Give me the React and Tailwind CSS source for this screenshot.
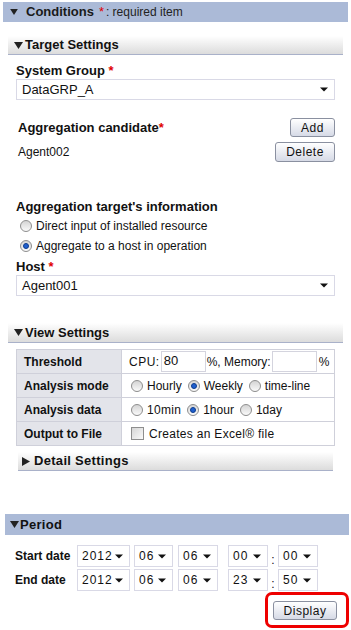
import React from 'react';

// small black caret used by every select box
const Caret = () => (
  <svg width="8" height="5" viewBox="0 0 8 5">
    <path d="M0 0.5h8L4 4.5z" fill="#111" />
  </svg>
);

const Down = ({ w = 9, h = 7 }) => (
  <svg width={w} height={h} viewBox="0 0 9 7">
    <path d="M0 0h9L4.5 7z" fill="#222" />
  </svg>
);

const Right = () => (
  <svg width="8" height="9" viewBox="0 0 8 9">
    <path d="M0 0l8 4.5L0 9z" fill="#222" />
  </svg>
);

const Select = ({ value }) => (
  <div className="flex items-center justify-between h-[21px] border border-[#d9d9e6] bg-white pl-[5px] pr-[6px] text-[13px]">
    <span>{value}</span>
    <Caret />
  </div>
);

const MiniSelect = ({ value, w }) => (
  <div className={`flex items-center justify-between h-[22px] border border-[#d9d9e6] bg-white pl-[4px] pr-[6px] text-[12px] ${w}`}>
    <span className="tracking-[1px]">{value}</span>
    <Caret />
  </div>
);

const Radio = ({ checked }) => (
  <span className="inline-flex items-center justify-center w-[12px] h-[12px] rounded-full border border-[#8e8e8e] bg-gradient-to-b from-[#d4d4d4] to-[#fafafa]">
    {checked && <span className="w-[6px] h-[6px] rounded-full bg-[#1f5fcf] border border-[#0d3c8c]" />}
  </span>
);

const Button = ({ children, w }) => (
  <button className={`h-[19px] ${w} rounded-[3px] border border-[#8a90a0] bg-gradient-to-b from-white to-[#d6dae6] text-[12px] tracking-[0.5px]`}>
    {children}
  </button>
);

const SubHeader = ({ children, className = '' }) => (
  <div className={`h-[19px] border-b border-[#a9b1c9] bg-gradient-to-b from-white to-[#dcdcdc] flex items-center gap-[1px] text-[13px] font-bold ${className}`}>
    {children}
  </div>
);

const DateRow = ({ label, values }) => (
  <div className="flex items-center h-[22px]">
    <span className="w-[62px] text-[12px] font-bold">{label}</span>
    <MiniSelect value={values[0]} w="w-[53px]" />
    <MiniSelect value={values[1]} w="w-[39px] ml-[4px]" />
    <MiniSelect value={values[2]} w="w-[40px] ml-[5px]" />
    <MiniSelect value={values[3]} w="w-[40px] ml-[10px]" />
    <span className="w-[10px] h-[22px] flex items-end justify-center text-[12px] leading-[14px]">:</span>
    <MiniSelect value={values[4]} w="w-[40px]" />
  </div>
);

export default function App() {
  return (
    <div className="w-[351px] h-[630px] bg-white text-[#111] overflow-hidden font-['Liberation_Sans',Arial,sans-serif]">
      {/* Conditions bar */}
      <div className="mt-[2px] ml-[3px] mr-[3px] h-[20px] bg-[#abbad7] flex items-center pl-[7px]">
        <Down w={8} h={6} />
        <span className="ml-[8px] text-[13px] font-bold text-[#1a1a1a]">Conditions</span>
        <span className="ml-[5px] text-[13px] text-[#e00000]">*</span>
        <span className="ml-[2px] text-[12px] text-[#222]">: required item</span>
      </div>

      {/* Target Settings */}
      <SubHeader className="mx-[8px] mt-[14px] pl-[6px]">
        <Down />
        <span className="ml-[1px]">Target Settings</span>
      </SubHeader>

      <div className="mx-[16px]">
        <div className="mt-[6px] h-[16px] text-[13px] font-bold">
          System Group <span className="text-[#e00000]">*</span>
        </div>
        <div className="mt-[2px]">
          <Select value="DataGRP_A" />
        </div>

        <div className="mt-[18px] flex items-center justify-between h-[19px]">
          <span className="ml-[2px] text-[13px] font-bold">
            Aggregation candidate<span className="text-[#e00000]">*</span>
          </span>
          <Button w="w-[45px]">Add</Button>
        </div>
        <div className="mt-[5px] flex items-center justify-between h-[20px]">
          <span className="ml-[2px] text-[12px]">Agent002</span>
          <Button w="w-[60px] h-[20px]">Delete</Button>
        </div>

        <div className="mt-[35px] h-[16px] text-[13px] font-bold">Aggregation target's information</div>
        <div className="ml-[4px] mt-[3px] flex items-center h-[20px] gap-[4px] text-[12px]">
          <Radio /> <span>Direct input of installed resource</span>
        </div>
        <div className="ml-[4px] flex items-center h-[20px] gap-[4px] text-[12px]">
          <Radio checked /> <span>Aggregate to a host in operation</span>
        </div>
        <div className="mt-[1px] h-[17px] text-[13px] font-bold">
          Host <span className="text-[#e00000]">*</span>
        </div>
        <div className="mt-[1px]">
          <Select value="Agent001" />
        </div>
      </div>

      {/* View Settings */}
      <SubHeader className="mx-[8px] mt-[27px] pl-[6px] h-[20px]">
        <Down />
        <span className="ml-[1px]">View Settings</span>
      </SubHeader>

      <div className="mx-[16px] mt-[6px]">
        <table className="w-full border-collapse border border-[#cfd0da] text-[12px]">
          <tbody>
            <tr className="h-[24px]">
              <td className="w-[105px] bg-[#e3e4ea] border border-[#cfd0da] pl-[7px] font-bold">Threshold</td>
              <td className="border border-[#cfd0da] pl-[7px]">
                <div className="flex items-center">
                  <span className="tracking-[0.5px]">CPU:</span>
                  <span className="ml-[1px] w-[45px] h-[21px] border border-[#d4d4de] pl-[2px] text-[13px] leading-[17px]">80</span>
                  <span className="ml-[1px]">%, Memory:</span>
                  <span className="ml-[1px] w-[45px] h-[21px] border border-[#d4d4de]" />
                  <span className="ml-[2px]">%</span>
                </div>
              </td>
            </tr>
            <tr className="h-[24px]">
              <td className="bg-[#e3e4ea] border border-[#cfd0da] pl-[7px] font-bold">Analysis mode</td>
              <td className="border border-[#cfd0da] pl-[9px]">
                <div className="flex items-center gap-[4px]">
                  <Radio /><span>Hourly</span>
                  <span className="ml-[2px] flex"><Radio checked /></span><span>Weekly</span>
                  <span className="ml-[2px] flex"><Radio /></span><span>time-line</span>
                </div>
              </td>
            </tr>
            <tr className="h-[24px]">
              <td className="bg-[#e3e4ea] border border-[#cfd0da] pl-[7px] font-bold">Analysis data</td>
              <td className="border border-[#cfd0da] pl-[9px]">
                <div className="flex items-center gap-[4px]">
                  <Radio /><span className="tracking-[0.3px]">10min</span>
                  <span className="ml-[2px] flex"><Radio checked /></span><span>1hour</span>
                  <span className="ml-[2px] flex"><Radio /></span><span>1day</span>
                </div>
              </td>
            </tr>
            <tr className="h-[24px]">
              <td className="bg-[#e3e4ea] border border-[#cfd0da] pl-[7px] font-bold">Output to File</td>
              <td className="border border-[#cfd0da] pl-[9px]">
                <div className="flex items-center gap-[5px]">
                  <span className="w-[13px] h-[13px] border border-[#8e8e8e] bg-gradient-to-br from-[#d6d6d6] to-[#fafafa]" />
                  <span className="tracking-[0.3px]">Creates an Excel® file</span>
                </div>
              </td>
            </tr>
          </tbody>
        </table>

        <SubHeader className="mx-[2px] mt-[6px] pl-[4px] h-[18px]">
          <Right />
          <span className="ml-[3px] tracking-[0.3px]">Detail Settings</span>
        </SubHeader>
      </div>

      {/* Period bar */}
      <div className="mt-[43px] ml-[5px] mr-[2px] h-[21px] bg-[#abbad7] flex items-center pl-[5px] text-[13px] font-bold">
        <Down />
        <span className="ml-[1px] tracking-[0.3px]">Period</span>
      </div>

      <div className="mt-[10px] ml-[15px] flex flex-col gap-[2px]">
        <DateRow label="Start date" values={['2012', '06', '06', '00', '00']} />
        <DateRow label="End date" values={['2012', '06', '06', '23', '50']} />
      </div>

      <div className="mt-[1px] mr-[2px] flex justify-end">
        <div className="flex border-[3px] border-[#ee0000] rounded-[7px] pl-[5px] pr-[9px] pt-[6px] pb-[5px]">
          <Button w="w-[64px]">Display</Button>
        </div>
      </div>
    </div>
  );
}
